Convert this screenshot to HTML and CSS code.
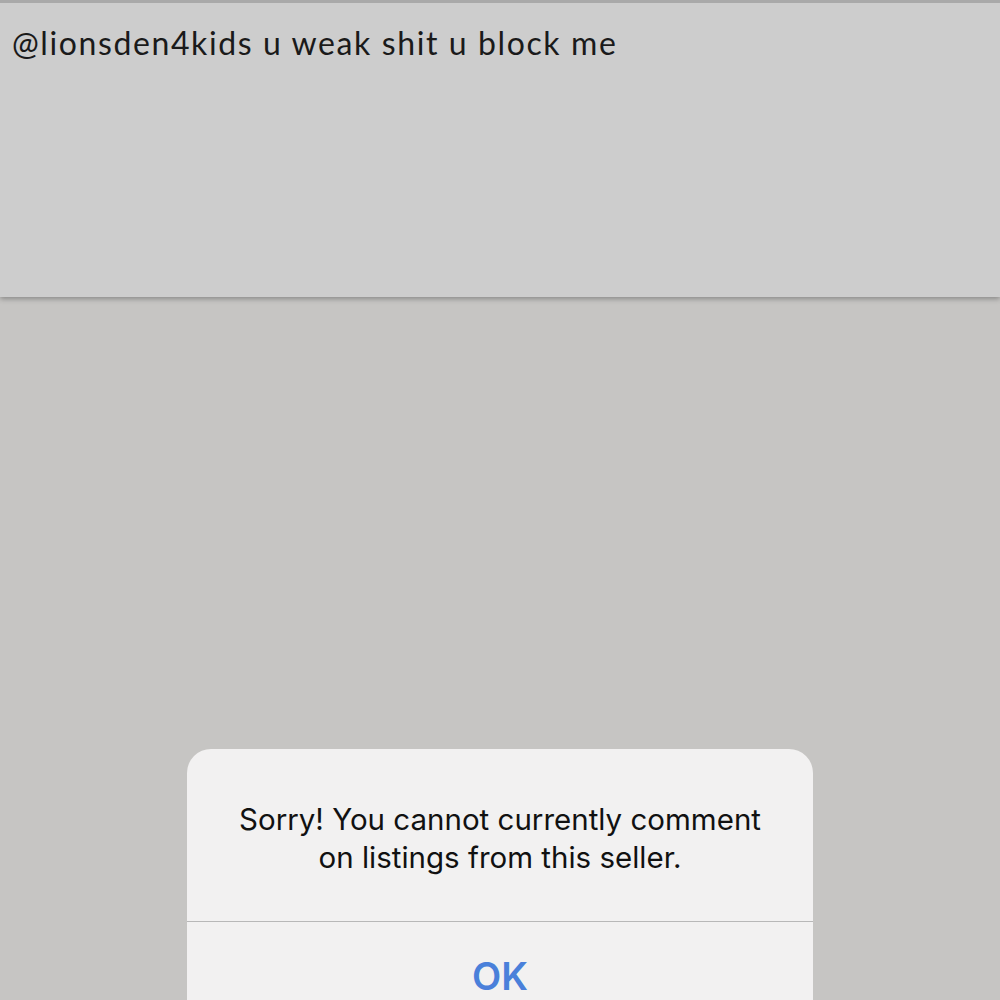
FILE: index.html
```html
<!DOCTYPE html>
<html>
<head>
<meta charset="utf-8">
<link rel="stylesheet" href="styles.css">
</head>
<body>
<div class="screen">
  <div class="composer">
    <div class="comment-text">@lionsden4kids u weak shit u block me</div>
  </div>
  <div class="backdrop">
    <div class="alert">
      <div class="alert-message">Sorry! You cannot currently comment on listings from this seller.</div>
      <div class="alert-button">OK</div>
    </div>
  </div>
</div>
</body>
</html>
```
FILE: styles.css
```css
html, body {
  margin: 0;
  padding: 0;
  width: 1000px;
  height: 1000px;
  overflow: hidden;
  background: #c6c5c3;
}
.screen {
  width: 1000px;
  height: 1000px;
  display: flex;
  flex-direction: column;
}
.composer {
  flex-shrink: 0;
  height: 297px;
  box-sizing: border-box;
  background: #cdcdcd;
  border-top: 3px solid #a9a9a9;
  box-shadow: 0 2px 5px rgba(0,0,0,0.3);
  position: relative;
  z-index: 1;
  padding: 20px 0 0 12px;
}
.comment-text {
  font-family: "Lato", "Noto Sans", sans-serif;
  font-size: 32px;
  color: #1a1a1a;
  letter-spacing: 1.6px;
}
.backdrop {
  flex-shrink: 0;
  display: flex;
  justify-content: center;
  align-items: flex-start;
  padding-top: 452px;
}
.alert {
  width: 626px;
  background: #f2f1f1;
  border-radius: 24px 24px 0 0;
  display: flex;
  flex-direction: column;
  height: 260px;
}
.alert-message {
  font-family: "Inter", "Roboto", sans-serif;
  font-size: 29.5px;
  line-height: 38px;
  text-align: center;
  color: #111;
  padding: 51px 40px 45px;
  border-bottom: 1px solid #b8b8b8;
}
.alert-button {
  font-family: "Inter", "Roboto", sans-serif;
  font-size: 38px;
  font-weight: 600;
  color: #4a80da;
  text-align: center;
  padding-top: 31px;
}
```
